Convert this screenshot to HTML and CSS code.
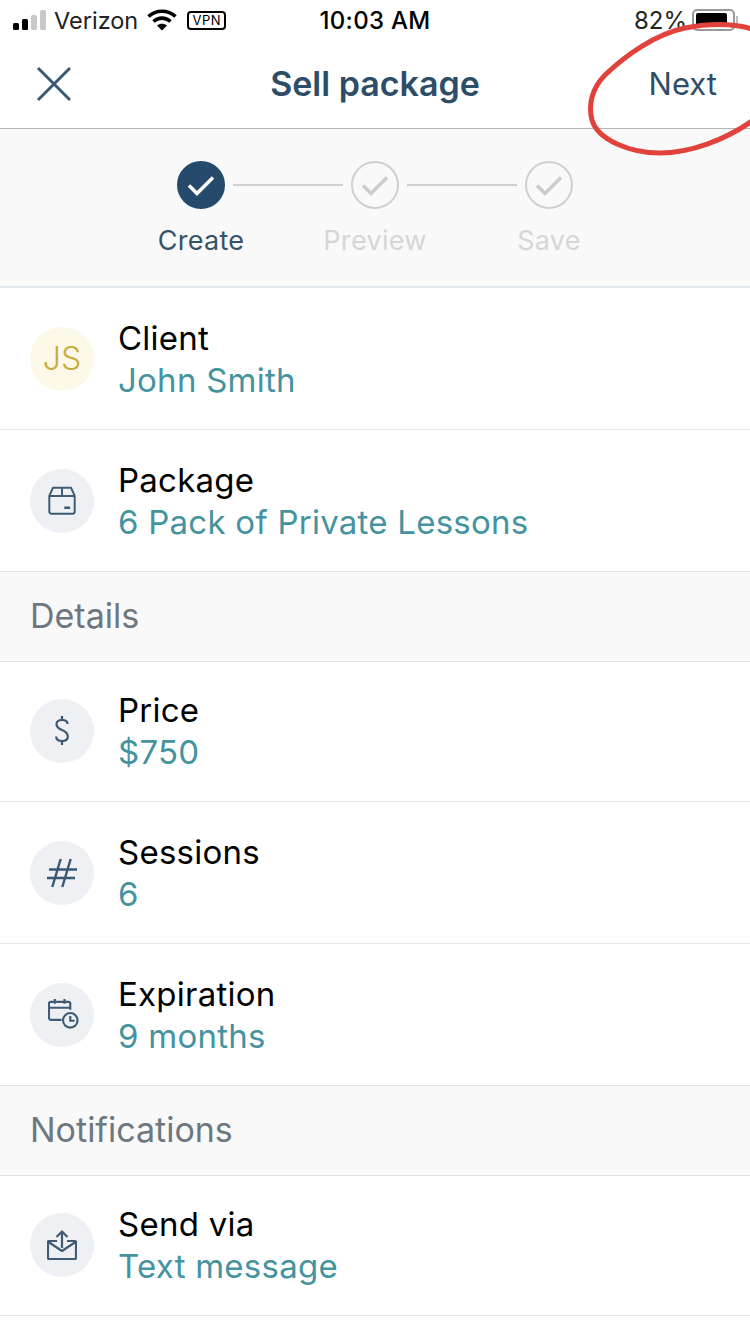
FILE: index.html
```html
<!DOCTYPE html>
<html lang="en">
<head>
  <meta charset="UTF-8" />
  <meta name="viewport" content="width=device-width, initial-scale=1.0" />
  <title>Sell package</title>
  <link rel="stylesheet" href="styles.css">
</head>
<body>

  <!-- Status bar -->
  <div class="status">
    <div class="status-left">
      <svg class="signal" width="33" height="20" viewBox="0 0 33 20">
        <rect x="0" y="13" width="6" height="7" rx="1.5" fill="#000"/>
        <rect x="9" y="9" width="6" height="11" rx="1.5" fill="#000"/>
        <rect x="18" y="5" width="6" height="15" rx="1.5" fill="#c8c8c8"/>
        <rect x="27" y="0" width="6" height="20" rx="1.5" fill="#c8c8c8"/>
      </svg>
      <span class="carrier">Verizon</span>
      <svg class="wifi" width="30" height="22" viewBox="0 0 30 22">
        <path d="M1.500 7.500C9 .5 21 .5 28.500 7.500" fill="none" stroke="#000" stroke-width="3.600"/>
        <path d="M6.500 12.500C11.500 8 18.500 8 23.500 12.500" fill="none" stroke="#000" stroke-width="3.600"/>
        <path d="M10 16.500C13 14 17 14 20 16.500L15 21.500Z" fill="#000"/>
      </svg>
      <span class="vpn">VPN</span>
    </div>
    <div class="time">10:03 AM</div>
    <div class="status-right">
      <span class="percent">82%</span>
      <div class="battery"><div class="battery-fill"></div></div>
      <div class="battery-tip"></div>
    </div>
  </div>

  <!-- Nav -->
  <div class="nav">
    <svg class="close" width="36" height="36" viewBox="0 0 36 36">
      <path d="M2 2L34 34M34 2L2 34" fill="none" stroke="#3a5872" stroke-width="3"/>
    </svg>
    <div class="nav-title">Sell package</div>
    <div class="nav-next">Next</div>
  </div>

  <!-- Steps -->
  <div class="steps">
    <div class="step step-on">
      <div class="step-dot">
        <svg width="28" height="22" viewBox="0 0 28 22"><path d="M2 11.500L10 19.500L26 3.500" fill="none" stroke="#fff" stroke-width="3.500"/></svg>
      </div>
      <div class="step-label">Create</div>
    </div>
    <div class="step-line"></div>
    <div class="step">
      <div class="step-dot">
        <svg width="28" height="22" viewBox="0 0 28 22"><path d="M2 11.500L10 19.500L26 3.500" fill="none" stroke="#ccc" stroke-width="3.500"/></svg>
      </div>
      <div class="step-label">Preview</div>
    </div>
    <div class="step-line"></div>
    <div class="step">
      <div class="step-dot">
        <svg width="28" height="22" viewBox="0 0 28 22"><path d="M2 11.500L10 19.500L26 3.500" fill="none" stroke="#ccc" stroke-width="3.500"/></svg>
      </div>
      <div class="step-label">Save</div>
    </div>
  </div>

  <!-- Client and package -->
  <div class="row">
    <div class="avatar avatar-client">JS</div>
    <div class="row-text">
      <div class="row-title">Client</div>
      <div class="row-value">John Smith</div>
    </div>
  </div>
  <div class="row row-tall">
    <div class="avatar">
      <svg width="28" height="29" viewBox="0 0 30 32" fill="none" stroke="#3f5b75" stroke-width="2.200" stroke-linejoin="round">
        <path d="M5 2H25L29 11V28A2.500 2.500 0 0 1 26.500 30.500H3.500A2.500 2.500 0 0 1 1 28V11Z"/>
        <path d="M1 11H29M15 2V11"/>
        <path d="M17.500 24H24" stroke-width="2.800"/>
      </svg>
    </div>
    <div class="row-text">
      <div class="row-title">Package</div>
      <div class="row-value">6 Pack of Private Lessons</div>
    </div>
  </div>

  <div class="section">Details</div>

  <div class="row row-short">
    <div class="avatar">
      <svg width="14" height="29" viewBox="0 0 14 29" fill="none" stroke="#3a5872" stroke-width="2.200">
        <path d="M12.500 8C12.500 5.500 10.500 4 7 4C3.500 4 1.500 5.800 1.500 8.200C1.500 11 3.500 12.500 7 14C10.800 15.500 12.800 17.500 12.800 20.500C12.800 23.500 10.500 25 7 25C3.500 25 1.200 23.500 1.200 20.500"/>
        <path d="M7 0V4M7 25V29"/>
      </svg>
    </div>
    <div class="row-text">
      <div class="row-title">Price</div>
      <div class="row-value">$750</div>
    </div>
  </div>
  <div class="row">
    <div class="avatar">
      <svg width="30" height="30" viewBox="0 0 30 30" fill="none" stroke="#3a5872" stroke-width="2.400">
        <path d="M13.700 1L5.300 29M23.700 1L15.300 29M2 11.500H30M0 20H28"/>
      </svg>
    </div>
    <div class="row-text">
      <div class="row-title">Sessions</div>
      <div class="row-value">6</div>
    </div>
  </div>
  <div class="row row-tall">
    <div class="avatar">
      <svg class="icon-cal" width="31" height="31" viewBox="0 0 32 32" fill="none" stroke="#3f5b75" stroke-width="2.200">
        <path d="M14 21.500H3A2 2 0 0 1 1 19.500V5A2 2 0 0 1 3 3H21A2 2 0 0 1 23 5V11"/>
        <path d="M1 9H23M7 0V5M17 0V5"/>
        <circle cx="23" cy="22" r="7.500"/>
        <path d="M23 17.500V22.500H27.500"/>
      </svg>
    </div>
    <div class="row-text">
      <div class="row-title">Expiration</div>
      <div class="row-value">9 months</div>
    </div>
  </div>

  <div class="section">Notifications</div>

  <div class="row row-short">
    <div class="avatar">
      <svg width="30" height="30" viewBox="0 0 30 30" fill="none" stroke="#3f5b75" stroke-width="2.200" stroke-linejoin="round">
        <path d="M10 11H2A1 1 0 0 0 1 12V28A1 1 0 0 0 2 29H28A1 1 0 0 0 29 28V12A1 1 0 0 0 28 11H20"/>
        <path d="M1.500 12L15 21L28.500 12"/>
        <path d="M15 18V1.500M9.500 7L15 1.500L20.500 7"/>
      </svg>
    </div>
    <div class="row-text">
      <div class="row-title">Send via</div>
      <div class="row-value">Text message</div>
    </div>
  </div>

  <!-- Red marker round the Next button -->
  <svg class="marker" width="750" height="170" viewBox="0 0 750 170">
    <path d="M752 29C735 24 712 23 685 28C655 34 625 56 605 75C592 88 588 105 592 120C598 140 630 153 660 153C690 153 725 140 752 121" fill="none" stroke="#e2423c" stroke-width="5"/>
  </svg>

</body>
</html>
```

FILE: styles.css
```css
body {
  margin: 0;
  position: relative;
  width: 750px;
  height: 1334px;
  overflow: hidden;
  background: #fff;
  color: #000;
  font-family: Inter, "Liberation Sans", sans-serif;
}

.status {
  height: 40px;
  padding: 0 12px 0 13px;
  display: flex;
  align-items: center;
  justify-content: space-between;
  position: relative;
  box-sizing: border-box;
  font-size: 24px;
}
.status-left {
  display: flex;
  align-items: center;
}
.signal {
  margin-right: 8px;
}
.carrier {
  color: #222;
  font-size: 23.5px;
  margin-right: 9px;
}
.wifi {
  margin-right: 10px;
}
.vpn {
  box-sizing: border-box;
  width: 39px;
  height: 19px;
  border: 2px solid #000;
  border-radius: 4px;
  font-size: 13px;
  letter-spacing: .5px;
  line-height: 15px;
  text-align: center;
}
.time {
  position: absolute;
  left: 0;
  right: 0;
  text-align: center;
  font-weight: 500;
  letter-spacing: .3px;
}
.status-right {
  display: flex;
  align-items: center;
}
.percent {
  margin-right: 5px;
  color: #222;
}
.battery {
  box-sizing: border-box;
  width: 43px;
  height: 22px;
  border: 2px solid #999;
  border-radius: 5px;
  padding: 2px;
}
.battery-fill {
  width: 31px;
  height: 14px;
  background: #000;
  border-radius: 2px;
}
.battery-tip {
  width: 2px;
  height: 8px;
  margin-left: 1px;
  background: #bbb;
}

.nav {
  height: 88px;
  padding: 0 33px 0 36px;
  display: flex;
  align-items: center;
  justify-content: space-between;
  position: relative;
  border-bottom: 1px solid #b5b5b5;
}
.nav-title {
  position: absolute;
  left: 0;
  right: 0;
  margin-top: -2px;
  text-align: center;
  color: #2d4d68;
  font-size: 34px;
  font-weight: 600;
}
.nav-next {
  margin-bottom: 2px;
  color: #2d4d68;
  font-size: 31px;
}

.steps {
  height: 159px;
  box-sizing: border-box;
  padding-top: 32px;
  display: flex;
  justify-content: center;
  align-items: flex-start;
  background: #f9f9f9;
  border-bottom: 2px solid #e2e9ec;
}
.step {
  width: 48px;
  display: flex;
  flex-direction: column;
  align-items: center;
}
.step-dot {
  box-sizing: border-box;
  width: 48px;
  height: 48px;
  flex: none;
  display: flex;
  align-items: center;
  justify-content: center;
  border-radius: 50%;
  border: 2px solid #d0d0d0;
}
.step-on .step-dot {
  background: #254a6b;
  border-color: #254a6b;
}
.step-label {
  margin-top: 16px;
  font-size: 27px;
  letter-spacing: .3px;
  line-height: 32px;
  color: #d6d6d6;
}
.step-on .step-label {
  color: #35526c;
}
.step-line {
  width: 110px;
  height: 2px;
  margin: 23px 8px 0;
  background: #cfcfcf;
}

.row {
  height: 142px;
  box-sizing: border-box;
  padding-left: 30px;
  display: flex;
  align-items: center;
  gap: 25px;
  border-bottom: 1px solid #e8e8e8;
}
.row-short {
  height: 140px;
  padding-bottom: 2px;
}
.row-tall {
  height: 141px;
  border-bottom: 0;
}
.avatar {
  width: 64px;
  height: 64px;
  flex: none;
  display: flex;
  align-items: center;
  justify-content: center;
  border-radius: 50%;
  background: #eef0f4;
}
.avatar-client {
  background: #fdf9e8;
  color: #c9ab3c;
  font-size: 32px;
  font-weight: 300;
}
.icon-cal {
  margin-left: 3px;
}
.row-text {
  display: flex;
  flex-direction: column;
  margin-left: -1px;
  letter-spacing: .25px;
}
.row-title {
  font-size: 33px;
  line-height: 42px;
}
.row-value {
  font-size: 33px;
  line-height: 42px;
  color: #45939f;
}

.section {
  height: 91px;
  box-sizing: border-box;
  padding: 0 0 2px 30px;
  display: flex;
  align-items: center;
  background: #f9f9f9;
  border-top: 1px solid #dfe3e5;
  border-bottom: 1px solid #dfe3e5;
  color: #6d7780;
  font-size: 34px;
}

.marker {
  position: absolute;
  left: 0;
  top: 0;
}
```
